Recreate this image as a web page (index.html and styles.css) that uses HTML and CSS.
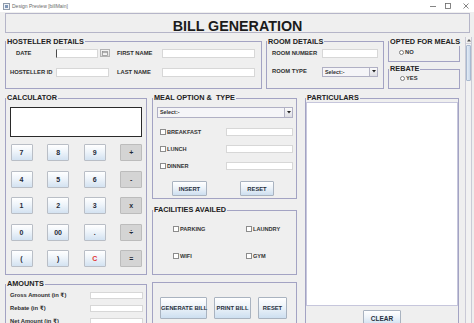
FILE: index.html
```html
<!DOCTYPE html>
<html lang="en">
<head>
<meta charset="utf-8">
<title>Design Preview [billMain]</title>
<link rel="stylesheet" href="styles.css">
</head>
<body>
<div class="titlebar">
  <svg class="app-icon" width="7" height="7" viewBox="0 0 7 7"><rect x="0.5" y="0.5" width="6" height="6" fill="#eef2f7" stroke="#8f9bab"/><rect x="2" y="2" width="3" height="3" fill="#7f97b8"/></svg>
  <span class="title-text">Design Preview [billMain]</span>
  <div class="win-controls">
    <svg class="wc wc-min" width="6" height="6" viewBox="0 0 6 6"><line x1="0" y1="3.5" x2="6" y2="3.5" stroke="#666" stroke-width="0.8"/></svg>
    <svg class="wc wc-max" width="6" height="6" viewBox="0 0 6 6"><rect x="0.5" y="0.5" width="5" height="5" fill="none" stroke="#666" stroke-width="0.8"/></svg>
    <svg class="wc wc-close" width="6" height="6" viewBox="0 0 6 6"><path d="M0.5 0.5 L5.5 5.5 M5.5 0.5 L0.5 5.5" stroke="#666" stroke-width="0.8"/></svg>
  </div>
</div>
<div class="window">
  <div class="header">BILL GENERATION</div>
  <div class="pane">
    <div class="content">
      <div class="top-row">
        <fieldset class="group hosteller">
          <legend>HOSTELLER DETAILS</legend>
          <div class="hosteller-form">
            <label class="lbl lbl-date">DATE</label>
            <div class="date-field">
              <input class="field date-input" type="text">
              <span class="cal-btn"><svg width="6" height="5" viewBox="0 0 6 5"><rect x="0.5" y="0.5" width="5" height="4" fill="#f4f4f4" stroke="#8a8a8a" stroke-width="0.7"/><line x1="0.5" y1="1.6" x2="5.5" y2="1.6" stroke="#8a8a8a" stroke-width="0.7"/></svg></span>
            </div>
            <label class="lbl lbl-right">FIRST NAME</label>
            <input class="field w93" type="text">
            <label class="lbl">HOSTELLER ID</label>
            <input class="field w53" type="text">
            <label class="lbl lbl-right">LAST NAME</label>
            <input class="field w93" type="text">
          </div>
        </fieldset>
        <fieldset class="group room">
          <legend>ROOM DETAILS</legend>
          <div class="room-form">
            <label class="lbl">ROOM NUMBER</label>
            <input class="field w56" type="text">
            <label class="lbl">ROOM TYPE</label>
            <div class="combo w56">
              <span class="combo-text">Select:-</span>
              <span class="combo-arrow"><svg width="4" height="3" viewBox="0 0 4 3"><path d="M0 0 H4 L2 2.6 Z" fill="#222"/></svg></span>
            </div>
          </div>
        </fieldset>
        <div class="meals-col">
          <fieldset class="group opted">
            <legend>OPTED FOR MEALS</legend>
            <label class="radio-row opted-row"><input type="radio" class="radio"><span>NO</span></label>
          </fieldset>
          <fieldset class="group rebate">
            <legend>REBATE</legend>
            <label class="radio-row rebate-row"><input type="radio" class="radio"><span>YES</span></label>
          </fieldset>
        </div>
      </div>

      <div class="main-grid">
        <fieldset class="group calc">
          <legend>CALCULATOR</legend>
          <div class="calc-body">
            <div class="calc-display"></div>
            <div class="calc-keys">
              <button class="cbtn">7</button><button class="cbtn">8</button><button class="cbtn">9</button><button class="cbtn op">+</button>
              <button class="cbtn">4</button><button class="cbtn">5</button><button class="cbtn">6</button><button class="cbtn op">-</button>
              <button class="cbtn">1</button><button class="cbtn">2</button><button class="cbtn">3</button><button class="cbtn op">x</button>
              <button class="cbtn">0</button><button class="cbtn">00</button><button class="cbtn">.</button><button class="cbtn op">÷</button>
              <button class="cbtn">(</button><button class="cbtn">)</button><button class="cbtn key-c">C</button><button class="cbtn op">=</button>
            </div>
          </div>
        </fieldset>

        <div class="middle">
          <fieldset class="group meal">
            <legend>MEAL OPTION &amp;&nbsp; TYPE</legend>
            <div class="meal-body">
              <div class="combo meal-combo">
                <span class="combo-text">Select:-</span>
                <span class="combo-arrow"><svg width="4" height="3" viewBox="0 0 4 3"><path d="M0 0 H4 L2 2.6 Z" fill="#222"/></svg></span>
              </div>
              <div class="meal-grid">
                <label class="check"><input type="checkbox" class="box"><span>BREAKFAST</span></label>
                <input class="field meal-field" type="text">
                <label class="check"><input type="checkbox" class="box"><span>LUNCH</span></label>
                <input class="field meal-field" type="text">
                <label class="check"><input type="checkbox" class="box"><span>DINNER</span></label>
                <input class="field meal-field" type="text">
              </div>
              <div class="meal-actions">
                <button class="btn btn-insert">INSERT</button>
                <button class="btn btn-reset1">RESET</button>
              </div>
            </div>
          </fieldset>
          <fieldset class="group facilities">
            <legend>FACILITIES AVAILED</legend>
            <div class="fac-grid">
              <label class="check"><input type="checkbox" class="box"><span>PARKING</span></label>
              <label class="check"><input type="checkbox" class="box"><span>LAUNDRY</span></label>
              <label class="check"><input type="checkbox" class="box"><span>WIFI</span></label>
              <label class="check"><input type="checkbox" class="box"><span>GYM</span></label>
            </div>
          </fieldset>
        </div>

        <fieldset class="group particulars">
          <legend>PARTICULARS</legend>
          <div class="part-area"></div>
          <div class="part-foot"><button class="btn btn-clear">CLEAR</button></div>
        </fieldset>

        <fieldset class="group amounts">
          <legend>AMOUNTS</legend>
          <div class="amt-grid">
            <label class="lbl amt-lbl">Gross Amount (in ₹)</label>
            <input class="field amt-field" type="text">
            <label class="lbl amt-lbl">Rebate (in ₹)</label>
            <input class="field amt-field" type="text">
            <label class="lbl amt-lbl">Net Amount (in ₹)</label>
            <input class="field amt-field" type="text">
          </div>
        </fieldset>

        <div class="actions">
          <button class="btn btn-gen">GENERATE BILL</button>
          <button class="btn btn-print">PRINT BILL</button>
          <button class="btn btn-reset2">RESET</button>
        </div>
      </div>
    </div>
    <div class="vscroll">
      <div class="sb-up"><svg width="4" height="3" viewBox="0 0 4 3"><path d="M0 2.6 H4 L2 0 Z" fill="#555"/></svg></div>
      <div class="sb-thumb"></div>
    </div>
  </div>
</div>
</body>
</html>
```
FILE: styles.css
```css
* { box-sizing: border-box; }
html, body { margin: 0; padding: 0; }
body {
  width: 474px;
  height: 323px;
  overflow: hidden;
  background: #efefef;
  font-family: "Liberation Sans", "DejaVu Sans", Arial, sans-serif;
  color: #2a2a2a;
}

/* title bar */
.titlebar {
  height: 12px;
  background: #ffffff;
  display: flex;
  align-items: center;
  padding-left: 3px;
}
.app-icon { display: block; flex: none; }
.title-text { margin-left: 2px; font-size: 5px; color: #6a6a6a; white-space: nowrap; }
.win-controls { margin-left: auto; display: flex; align-items: center; padding-right: 5px; }
.wc { display: block; }
.wc-max { margin-left: 9px; }
.wc-close { margin-left: 12px; }

/* window */
.window { padding: 1px 0 0 5px; }
.header {
  height: 20px;
  margin-right: 4px;
  border: 1px solid #b5b5c8;
  display: flex;
  align-items: flex-end;
  justify-content: center;
  padding-bottom: 0.5px;
  font-weight: bold;
  font-size: 14.3px;
  line-height: 12px;
  color: #1b1b1b;
}
.pane { display: flex; margin-top: 3px; height: 287px; overflow: hidden; }
.content { width: 460px; flex: none; padding-top: 1.5px; }

/* group boxes */
.group {
  margin: 0;
  padding: 0;
  border: 1px solid #a3a3c3;
  min-width: 0;
}
.group > legend {
  margin-left: 0;
  padding: 0 1px;
  font-size: 7.3px;
  font-weight: bold;
  line-height: 8px;
  color: #222;
  white-space: nowrap;
}

.lbl {
  font-size: 5.8px;
  font-weight: bold;
  color: #2e2e2e;
  white-space: nowrap;
  line-height: 9px;
}
.field {
  display: block;
  height: 9px;
  margin: 0;
  padding: 0;
  border: 1px solid #d7d7d7;
  background: #ffffff;
  font: inherit;
  outline: none;
}
.w93 { width: 93px; }
.w56 { width: 56px; }
.w53 { width: 53px; }

/* top row */
.top-row { display: flex; gap: 4px; height: 51px; }
.hosteller { width: 257px; height: 51px; }
.room { width: 118px; height: 51px; }
.meals-col { width: 72px; display: flex; flex-direction: column; gap: 3px; }
.opted { height: 24.5px; }
.rebate { height: 23.5px; }

.hosteller-form {
  display: grid;
  grid-template-columns: 46px 54px 52px 93px;
  grid-auto-rows: 9px;
  row-gap: 10px;
  align-items: center;
  padding: 3px 0 0 4px;
}
.lbl-date { padding-left: 6px; }
.lbl-right { padding-left: 7px; }
.date-field { display: flex; align-items: center; gap: 2px; }
.date-input { width: 42px; border-left: 1px solid #4a4a4a; }
.cal-btn {
  width: 10px;
  height: 8px;
  border: 1px solid #b3b3b3;
  background: linear-gradient(#f4f4f4, #dcdcdc);
  display: flex;
  align-items: center;
  justify-content: center;
}
.cal-btn svg { display: block; }

.room-form {
  display: grid;
  grid-template-columns: 50px 56px;
  grid-template-rows: 9px 10px;
  row-gap: 9px;
  align-items: center;
  padding: 3px 0 0 5px;
}

.combo {
  display: flex;
  align-items: stretch;
  height: 10px;
  border: 1px solid #b0b0c4;
  background: #f5f5f8;
  font-size: 5.4px;
  font-weight: bold;
  color: #333;
}
.combo-text { flex: 1; padding-left: 2px; line-height: 8px; }
.combo-arrow {
  width: 8px;
  border-left: 1px solid #b4b4c4;
  background: linear-gradient(#fbfbfb, #dedee4);
  display: flex;
  align-items: center;
  justify-content: center;
}
.combo-arrow svg { display: block; }

.radio-row {
  display: flex;
  align-items: center;
  gap: 1px;
  font-size: 5.8px;
  font-weight: bold;
  color: #333;
  line-height: 6px;
}
.opted-row { padding: 3.5px 0 0 10px; }
.rebate-row { padding: 2px 0 0 11px; }
.radio {
  appearance: none;
  -webkit-appearance: none;
  width: 5px;
  height: 5px;
  margin: 0;
  border: 1px solid #7d7d7d;
  border-radius: 50%;
  background: #fff;
}

/* main grid */
.main-grid {
  display: grid;
  grid-template-columns: 142px 148px 154px;
  grid-template-rows: 181px auto;
  column-gap: 5px;
  row-gap: 5px;
  margin-top: 5.5px;
}
.calc { grid-column: 1; grid-row: 1; height: 181px; }
.middle { grid-column: 2; grid-row: 1; width: 145px; display: flex; flex-direction: column; gap: 7px; }
.particulars { grid-column: 3; grid-row: 1 / span 2; }
.amounts { grid-column: 1; grid-row: 2; height: 60px; }
.actions { grid-column: 2; grid-row: 2; width: 145px; }

/* calculator */
.calc-body { padding: 5px 4px 0 4px; }
.calc-display { height: 30px; border: 1.5px solid #2a2a2a; background: #ffffff; }
.calc-keys {
  margin-top: 7px;
  padding-left: 0.5px;
  display: grid;
  grid-template-columns: repeat(4, 22px);
  grid-auto-rows: 17px;
  column-gap: 14.6px;
  row-gap: 9.6px;
}
.cbtn {
  margin: 0;
  padding: 0;
  border: 1px solid #b9bec6;
  border-radius: 1px;
  background: linear-gradient(#ffffff 0%, #eef4fa 45%, #d3e2f1 100%);
  font-family: "Liberation Sans", "DejaVu Sans", sans-serif;
  font-size: 7px;
  font-weight: bold;
  color: #1f2a38;
  display: flex;
  align-items: center;
  justify-content: center;
}
.cbtn.op { background: #d4d4d4; border-color: #bcbcbc; }
.cbtn.key-c { color: #e23434; }

/* meal */
.meal { height: 105px; }
.meal-body { padding: 5px 4px 0 4px; }
.meal-combo { width: 136px; height: 10.5px; }
.meal-grid {
  margin-top: 10.5px;
  padding-left: 3px;
  display: grid;
  grid-template-columns: 66px 67px;
  grid-auto-rows: 7.5px;
  row-gap: 9.5px;
  align-items: center;
}
.meal-field { width: 67px; height: 7.5px; }
.check {
  display: flex;
  align-items: center;
  gap: 1px;
  font-size: 5.6px;
  font-weight: bold;
  color: #333;
  line-height: 6px;
  white-space: nowrap;
}
.box {
  appearance: none;
  -webkit-appearance: none;
  width: 6px;
  height: 6px;
  margin: 0;
  border: 1px solid #8c8c8c;
  background: #ffffff;
}
.meal-actions { display: flex; margin-top: 11.5px; padding-left: 15px; gap: 33px; }

.btn {
  margin: 0;
  padding: 0;
  border: 1px solid #a9b3c0;
  border-radius: 1px;
  background: linear-gradient(#ffffff 0%, #edf3f9 45%, #cddff0 100%);
  font-family: "Liberation Sans", "DejaVu Sans", sans-serif;
  font-size: 5.8px;
  font-weight: bold;
  color: #27303d;
  white-space: nowrap;
}
.btn-insert { width: 35px; height: 15px; }
.btn-reset1 { width: 34px; height: 15px; }

/* facilities */
.facilities { height: 68.5px; }
.fac-grid {
  display: grid;
  grid-template-columns: 73px auto;
  grid-auto-rows: 6px;
  row-gap: 21px;
  padding: 12px 0 0 20px;
}

/* particulars */
.part-area { height: 204px; background: #ffffff; border: 1px solid #c6c6dc; }
.part-foot { display: flex; justify-content: center; padding: 4px 0 20px; }
.btn-clear { width: 38px; height: 16px; font-size: 6.5px; }

/* amounts */
.amt-grid {
  display: grid;
  grid-template-columns: 80px 53px;
  grid-auto-rows: 7px;
  row-gap: 6.3px;
  align-items: center;
  padding: 3.7px 0 0 4px;
}
.amt-lbl { line-height: 7px; }
.amt-field { width: 53px; height: 7px; }

/* bottom actions */
.actions {
  margin-top: 2px;
  height: 50px;
  border: 1px solid #a3a3c3;
  display: flex;
  align-items: flex-start;
  gap: 7px;
  padding: 14px 0 0 7px;
}
.btn-gen { width: 47px; height: 22px; }
.btn-print { width: 37px; height: 22px; }
.btn-reset2 { width: 29px; height: 22px; }

/* scrollbar */
.vscroll {
  width: 7px;
  flex: none;
  margin-top: 1px;
  border-left: 1px solid #cacad6;
  border-right: 1px solid #cacad6;
  background: #f2f2f2;
  display: flex;
  flex-direction: column;
  align-items: stretch;
}
.sb-up {
  height: 7px;
  display: flex;
  align-items: center;
  justify-content: center;
  border-bottom: 1px solid #d0d0d8;
}
.sb-up svg { display: block; }
.sb-thumb {
  height: 36px;
  margin-top: 1px;
  background: linear-gradient(to right, #e3ebf5, #c9d8ea);
  border: 1px solid #a9bad0;
  border-radius: 1px;
}
```
